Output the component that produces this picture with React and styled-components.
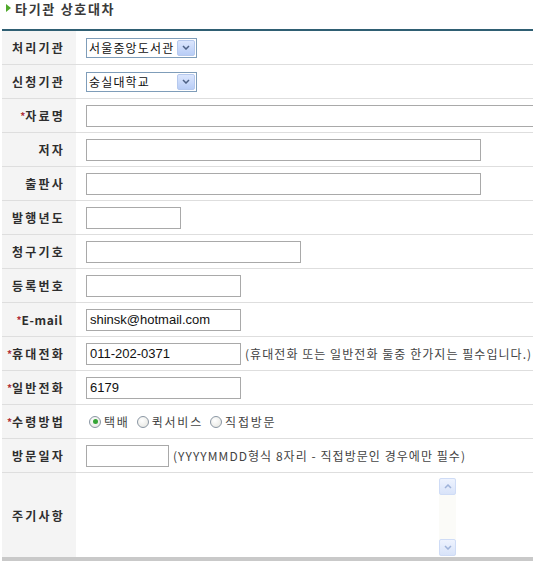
import React from "react";
import styled, { createGlobalStyle } from "styled-components";

const Global = createGlobalStyle`
  html, body { margin: 0; padding: 0; background: #fff; }
  body { font-family: "Noto Sans CJK KR", "Noto Sans", sans-serif; font-size: 12px; color: #333; }
`;

const Page = styled.div`
  width: 533px;
  padding: 0 0 0 2px;
  box-sizing: border-box;
  overflow: hidden;
`;

const Title = styled.h2`
  margin: 0;
  height: 29px;
  display: flex;
  align-items: flex-start;
  gap: 4px;
  padding: 0 0 0 4px;
  font-size: 13px;
  font-weight: bold;
  color: #3a3a3a;
  line-height: 17px;
  letter-spacing: 1.7px;
`;

const Arrow = styled.span`
  width: 0;
  height: 0;
  margin-top: 4px;
  border-left: 5px solid #4fa82b;
  border-top: 4.5px solid transparent;
  border-bottom: 4.5px solid transparent;
`;

const Form = styled.div`
  border-top: 2px solid #2f5f73;
  border-bottom: 4px solid #c9c9c9;
  display: grid;
  grid-template-columns: 74px 1fr;
`;

const Label = styled.div`
  background: #f4f4f4;
  height: ${p => p.$h || 33}px;
  border-bottom: 1px solid #dedede;
  display: flex;
  align-items: center;
  justify-content: flex-end;
  padding-right: ${p => (p.$latin ? 13 : 11)}px;
  font-weight: bold;
  font-size: 12px;
  color: #2e2e2e;
  letter-spacing: ${p => (p.$latin ? 0.6 : 2.2)}px;
  ${p => p.$last && "border-bottom: none;"}
`;

const Star = styled.span`
  color: #b0303a;
  font-size: 10px;
  margin-right: 0;
  letter-spacing: 0;
`;

const Cell = styled.div`
  height: ${p => p.$h || 33}px;
  border-bottom: 1px solid #dedede;
  display: flex;
  align-items: center;
  padding-left: 10px;
  gap: 4px;
  white-space: nowrap;
  ${p => p.$last && "border-bottom: none; align-items: flex-start; padding-top: 5px; box-sizing: border-box;"}
`;

const Input = styled.div`
  width: ${p => p.$w}px;
  flex: none;
  height: 22px;
  box-sizing: border-box;
  border: 1px solid #a9a9a9;
  background: #fff;
  font-family: "Liberation Sans", "Noto Sans CJK KR", sans-serif;
  font-size: 13px;
  color: #111;
  display: flex;
  align-items: center;
  padding-left: 3px;
`;

const Hint = styled.span`
  font-size: 12px;
  color: #444;
  letter-spacing: 1.05px;
`;

const Select = styled.div`
  width: 111px;
  height: 20px;
  box-sizing: border-box;
  border: 1px solid #7f9db9;
  background: #fff;
  display: flex;
  align-items: stretch;
  font-size: 12px;
  color: #111;
`;

const SelectText = styled.span`
  flex: 1;
  min-width: 0;
  overflow: hidden;
  padding-left: 2px;
  display: flex;
  align-items: center;
  letter-spacing: 1.15px;
`;

const SelectBtn = styled.span`
  width: 16px;
  flex: none;
  margin: 1px;
  border: 1px solid #b6c9ee;
  border-radius: 2px;
  background: linear-gradient(#dbe6fd, #b8cdf6);
  display: flex;
  align-items: center;
  justify-content: center;
`;

const Radios = styled.div`
  display: flex;
  align-items: center;
  padding-left: 3px;
  font-size: 12px;
  color: #444;
`;

const RadioItem = styled.label`
  display: flex;
  align-items: center;
  gap: 3px;
  margin-right: 7px;
  letter-spacing: 1.8px;
`;

const RadioCircle = styled.span`
  width: 12px;
  height: 12px;
  box-sizing: border-box;
  border-radius: 50%;
  border: 1px solid #8a96a3;
  background: radial-gradient(circle at 40% 35%, #ffffff, #e3e3dd);
  display: flex;
  align-items: center;
  justify-content: center;
  &::after {
    content: "";
    display: ${p => (p.$on ? "block" : "none")};
    width: 5px;
    height: 5px;
    border-radius: 50%;
    background: #35a435;
  }
`;

const TextArea = styled.div`
  width: 370px;
  height: 78px;
  display: flex;
  justify-content: flex-end;
`;

const Scroll = styled.div`
  width: 17px;
  height: 78px;
  background: #fbfbf8;
  display: flex;
  flex-direction: column;
  justify-content: space-between;
`;

const ScrollBtn = styled.span`
  height: 17px;
  box-sizing: border-box;
  border: 1px solid #cfdcf6;
  border-radius: 2px;
  background: linear-gradient(#eef3fe, #d8e3f9);
  display: flex;
  align-items: center;
  justify-content: center;
`;

const Chevron = ({ up, color = "#4d6185" }) => (
  <svg width="8" height="5" viewBox="0 0 8 5">
    <path
      d={up ? "M1 4 L4 1 L7 4" : "M1 1 L4 4 L7 1"}
      fill="none"
      stroke={color}
      strokeWidth="1.5"
    />
  </svg>
);

const rows = [
  { label: "처리기관", kind: "select", value: "서울중앙도서관" },
  { label: "신청기관", kind: "select", value: "숭실대학교" },
  { label: "자료명", req: true, w: 460 },
  { label: "저자", w: 395 },
  { label: "출판사", w: 395 },
  { label: "발행년도", w: 95 },
  { label: "청구기호", w: 215 },
  { label: "등록번호", w: 155 },
  { label: "E-mail", req: true, latin: true, w: 155, value: "shinsk@hotmail.com" },
  { label: "휴대전화", req: true, w: 155, value: "011-202-0371", hint: "(휴대전화 또는 일반전화 둘중 한가지는 필수입니다.)" },
  { label: "일반전화", req: true, w: 155, value: "6179" },
  { label: "수령방법", req: true, kind: "radio" },
  { label: "방문일자", w: 83, hint: "(YYYYMMDD형식 8자리 - 직접방문인 경우에만 필수)" },
  { label: "주기사항", kind: "textarea", h: 84, last: true },
];

function Field({ r }) {
  if (r.kind === "select")
    return (
      <Select>
        <SelectText>{r.value}</SelectText>
        <SelectBtn>
          <Chevron />
        </SelectBtn>
      </Select>
    );
  if (r.kind === "radio")
    return (
      <Radios>
        {["택배", "퀵서비스", "직접방문"].map((t, i) => (
          <RadioItem key={t}>
            <RadioCircle $on={i === 0} />
            {t}
          </RadioItem>
        ))}
      </Radios>
    );
  if (r.kind === "textarea")
    return (
      <TextArea>
        <Scroll>
          <ScrollBtn>
            <Chevron up color="#9fb3d9" />
          </ScrollBtn>
          <ScrollBtn>
            <Chevron color="#9fb3d9" />
          </ScrollBtn>
        </Scroll>
      </TextArea>
    );
  return (
    <>
      <Input $w={r.w}>{r.value}</Input>
      {r.hint && <Hint>{r.hint}</Hint>}
    </>
  );
}

export default function App() {
  return (
    <Page>
      <Global />
      <Title>
        <Arrow />
        타기관 상호대차
      </Title>
      <Form>
        {rows.map(r => (
          <React.Fragment key={r.label}>
            <Label $h={r.h} $last={r.last} $latin={r.latin}>
              {r.req && <Star>*</Star>}
              {r.label}
            </Label>
            <Cell $h={r.h} $last={r.last}>
              <Field r={r} />
            </Cell>
          </React.Fragment>
        ))}
      </Form>
    </Page>
  );
}
